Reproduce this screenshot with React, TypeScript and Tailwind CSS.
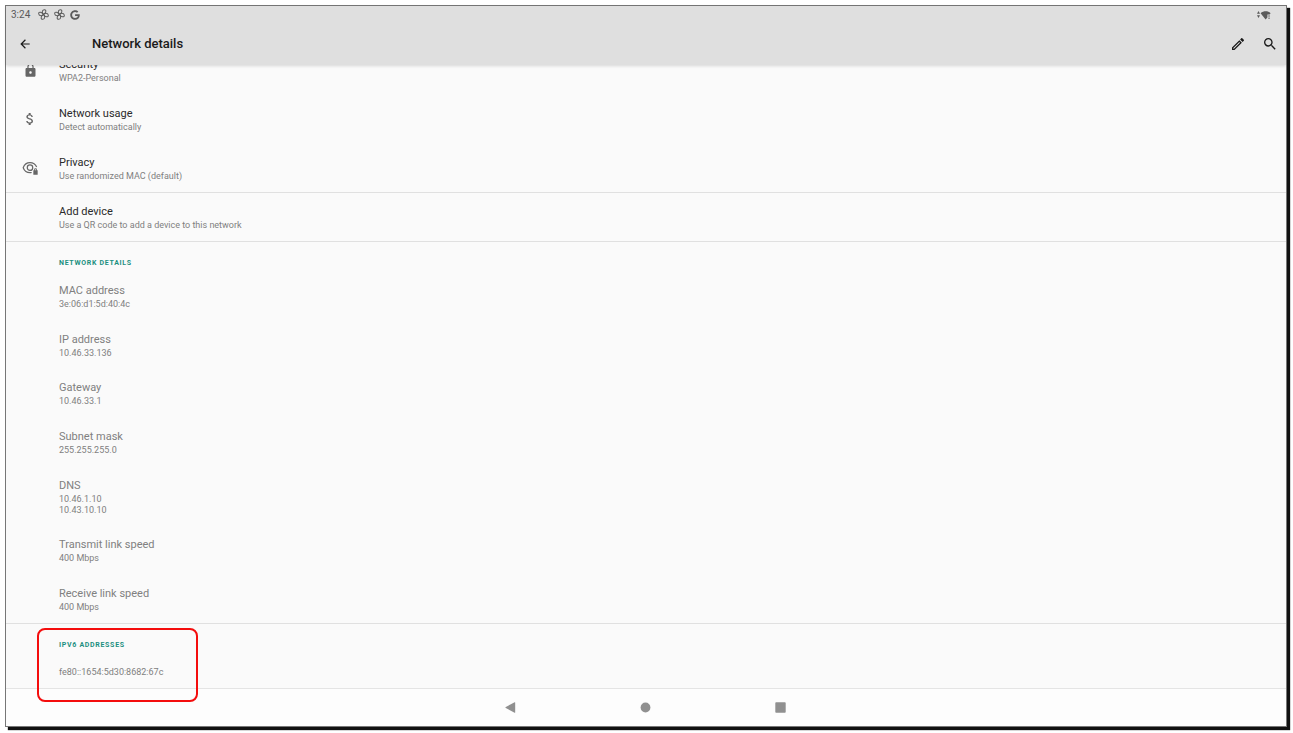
import type { ReactNode } from "react";
import { MdArrowBack, MdAttachMoney, MdLock, MdOutlineEdit, MdSearch } from "react-icons/md";
import { FaGoogle } from "react-icons/fa";

type Detail = { title: string; lines: string[] };

const details: Detail[] = [
  { title: "MAC address", lines: ["3e:06:d1:5d:40:4c"] },
  { title: "IP address", lines: ["10.46.33.136"] },
  { title: "Gateway", lines: ["10.46.33.1"] },
  { title: "Subnet mask", lines: ["255.255.255.0"] },
  { title: "DNS", lines: ["10.46.1.10", "10.43.10.10"] },
  { title: "Transmit link speed", lines: ["400 Mbps"] },
  { title: "Receive link speed", lines: ["400 Mbps"] },
];

function PinwheelIcon() {
  return (
    <svg viewBox="0 0 24 24" className="size-[11px]" fill="none" stroke="currentColor" strokeWidth="2.2" strokeLinejoin="round" aria-hidden="true">
      <path d="M12 12C8.500 10 8 2 13.500 1.500S18 9 12 12Z" />
      <path d="M12 12c2-3.500 10-4 10.500 1.500S15 18 12 12Z" />
      <path d="M12 12c3.500 2 4 10-1.500 10.500S6 15 12 12Z" />
      <path d="M12 12c-2 3.500-10 4-10.500-1.500S9 6 12 12Z" />
    </svg>
  );
}

function WifiStatusIcon() {
  return (
    <svg viewBox="0 0 16 10" className="h-[10px] w-4" fill="currentColor" aria-hidden="true">
      <path d="M2.5 1 4 3.8H1ZM2.5 8 1 5.2h3Z" />
      <path d="M4.6 3.2C7.5.6 12 .6 14.6 3.2L13.6 4.500h-2.200v3L9.600 9.500Z" />
      <path d="M12.300 5.300h1.500v1.500h-1.500ZM12.300 7.500h1.500V9h-1.500Z" opacity=".7" />
    </svg>
  );
}

function PrivacyIcon() {
  return (
    <svg viewBox="0 0 24 24" className="size-4" aria-hidden="true">
      <g fill="none" stroke="currentColor" strokeWidth="1.8">
        <path d="M22 10.500C20.200 6.400 16.500 4 12 4S3.600 6.700 1.800 11.500C3.600 16.300 7.500 19 12 19c.9 0 1.700-.1 2.500-.3" />
        <circle cx="12" cy="11.500" r="4.100" />
      </g>
      <path fill="currentColor" d="M22.500 15.500v-.8a2.200 2.200 0 0 0-4.400 0v.8H17V22h6.500v-6.500Zm-3.200 0v-.8a1 1 0 0 1 2 0v.8Z" />
    </svg>
  );
}

function Row({ icon, title, text, divider }: { icon?: ReactNode; title: string; text: string; divider?: boolean }) {
  return (
    <li className={divider ? "border-b border-[#e0e0e0]" : "pb-px"}>
      <button type="button" className="flex h-12 w-full items-center text-left">
        <span className="flex w-[53px] shrink-0 justify-center pr-[5px] text-[#666]">{icon}</span>
        <span className="flex flex-col gap-px pt-px">
          <span className="text-[11px] leading-[14px] text-[#2a2a2a]">{title}</span>
          <span className="text-[9px] leading-[11px] text-[#808080]">{text}</span>
        </span>
      </button>
    </li>
  );
}

function SectionTitle({ children }: { children: string }) {
  return <h2 className="pt-[15px] pb-[3px] pl-[53px] text-[7px] leading-3 font-bold tracking-widest text-[#1b8f80] uppercase">{children}</h2>;
}

export default function App() {
  return (
    <div className="h-screen min-h-[640px] bg-white pt-[5px] pr-[6px] pb-[6px] pl-[5px] font-['Roboto','Noto_Sans',sans-serif]">
      <div className="flex h-full flex-col border border-[#777] bg-[#fafafa] shadow-[3px_3px_1px_#111]">
        <header className="relative z-10 bg-[#dfdfdf] shadow-[0_1px_3px_rgba(0,0,0,0.14)]">
          <div className="flex h-[17px] items-center justify-between pr-[14px] pl-[5px] text-[#5a5a5a]">
            <div className="flex items-center gap-[5px]">
              <time className="mr-[3px] text-[10px] leading-4">3:24</time>
              <PinwheelIcon />
              <PinwheelIcon />
              <FaGoogle className="size-[10px]" aria-hidden="true" />
            </div>
            <WifiStatusIcon />
          </div>
          <div className="flex h-[42px] items-center pr-2 pl-3 text-[#1a1a1a]">
            <button type="button" aria-label="Back">
              <MdArrowBack className="size-[14px]" />
            </button>
            <h1 className="ml-[60px] flex-1 text-[13px] leading-4 font-medium">Network details</h1>
            <div className="flex items-center gap-4">
              <button type="button" aria-label="Edit">
                <MdOutlineEdit className="size-4" />
              </button>
              <button type="button" aria-label="Search">
                <MdSearch className="size-4" />
              </button>
            </div>
          </div>
        </header>

        <main className="flex min-h-0 flex-1 flex-col">
          <div className="overflow-hidden">
            <ul className="-mt-[19px]">
              <Row icon={<MdLock className="size-[15px]" />} title="Security" text="WPA2-Personal" />
              <Row icon={<MdAttachMoney className="size-4" />} title="Network usage" text="Detect automatically" />
              <Row icon={<PrivacyIcon />} title="Privacy" text="Use randomized MAC (default)" divider />
              <Row title="Add device" text="Use a QR code to add a device to this network" divider />
            </ul>
          </div>

          <section className="flex flex-1 flex-col border-b border-[#e0e0e0]">
            <SectionTitle>Network details</SectionTitle>
            <dl className="flex flex-1 flex-col justify-between pt-3 pb-[10px] pl-[53px] text-[#808080]">
              {details.map(({ title, lines }) => (
                <div key={title} className="flex flex-col gap-px">
                  <dt className="text-[11px] leading-[14px]">{title}</dt>
                  <dd className="text-[9px] leading-[11px]">
                    {lines.map((line) => (
                      <span key={line} className="block">{line}</span>
                    ))}
                  </dd>
                </div>
              ))}
            </dl>
          </section>

          <section className="relative h-[65px] border-b border-[#e4e4e4]">
            <SectionTitle>IPv6 addresses</SectionTitle>
            <p className="pt-[13px] pl-[53px] text-[9px] leading-[11px] text-[#808080]">fe80::1654:5d30:8682:67c</p>
            <div className="pointer-events-none absolute top-1 left-[31px] z-10 h-[74px] w-[161px] rounded-lg border-2 border-[#f40d0d]" />
          </section>
        </main>

        <nav className="flex h-[37px] items-center justify-center gap-[124px] bg-[#fdfdfd] pr-0.5 text-[#909090]">
          <button type="button" aria-label="Back">
            <svg viewBox="0 0 11 11" className="size-[11px]" fill="currentColor"><path d="M.8 5 9.600.2q.6-.2.6.5v9.600q0 .7-.6.5L.8 6Q0 5.500.8 5Z" /></svg>
          </button>
          <button type="button" aria-label="Home">
            <svg viewBox="0 0 11 11" className="size-[11px]" fill="currentColor"><circle cx="5.500" cy="5.500" r="4.900" /></svg>
          </button>
          <button type="button" aria-label="Overview">
            <svg viewBox="0 0 11 11" className="size-[11px]" fill="currentColor"><rect x=".3" y=".3" width="10.400" height="10.400" rx=".8" /></svg>
          </button>
        </nav>
      </div>
    </div>
  );
}
